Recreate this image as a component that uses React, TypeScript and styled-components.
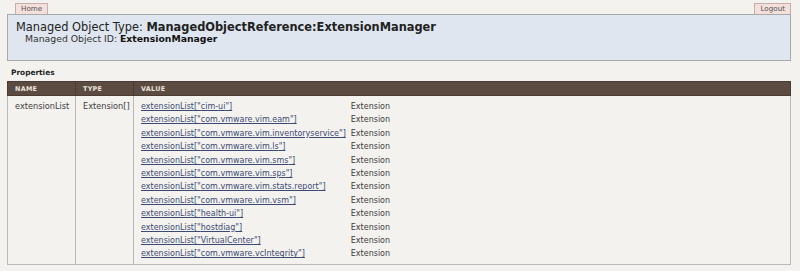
import * as React from 'react';
import styled, { createGlobalStyle } from 'styled-components';

const GlobalStyle = createGlobalStyle`
  html, body {
    margin: 0;
    padding: 0;
    background: #f4f2ef;
  }
  body {
    font-family: "DejaVu Sans", Verdana, sans-serif;
    color: #3a3a3a;
  }
`;

const Page = styled.div`
  padding: 3px 9px 0 7px;
`;

const TabBar = styled.div`
  display: flex;
  justify-content: space-between;
  align-items: flex-end;
  padding: 0 0 0 8px;
`;

const Tab = styled.a`
  display: block;
  height: 10px;
  line-height: 10px;
  padding: 0 5px;
  font-size: 7.2px;
  color: #555;
  background: #f3dfdc;
  border: 1px solid #c7aeaa;
  border-bottom: none;
  text-decoration: none;
`;

const HeaderBox = styled.div`
  height: 47px;
  box-sizing: border-box;
  background: #dfe6ef;
  border: 1px solid #a9a9a9;
  padding: 5px 8px 0 8px;
`;

const Title = styled.div`
  font-size: 11.4px;
  line-height: 14px;
  color: #222;

  b {
    font-weight: bold;
  }
`;

const SubTitle = styled.div`
  font-size: 9.3px;
  line-height: 9px;
  padding-left: 9px;
  color: #333;

  b {
    font-weight: bold;
    color: #111;
  }
`;

const SectionLabel = styled.div`
  font-size: 7.4px;
  font-weight: bold;
  color: #222;
  padding: 6px 0 0 4px;
  line-height: 12px;
  height: 14px;
`;

const Table = styled.table`
  width: 100%;
  border-collapse: collapse;
  font-size: 8px;
`;

const HeadCell = styled.th<{ $w?: number }>`
  background: #5b4b41;
  color: #ece4dc;
  font-size: 6.4px;
  font-weight: bold;
  text-align: left;
  height: 14px;
  padding: 0 0 0 7px;
  width: ${p => (p.$w ? `${p.$w}px` : 'auto')};
  box-sizing: border-box;
  border: 1px solid #4a3c33;
  letter-spacing: 0.3px;
`;

const Cell = styled.td`
  vertical-align: top;
  padding: 4px 0 3px 7px;
  border: 1px solid #b9b9b9;
  border-top: none;
  color: #3c3c3c;
  line-height: 13.4px;
`;

const NameText = styled.span`
  font-size: 8.2px;
`;

const ValueGrid = styled.div`
  display: grid;
  grid-template-columns: auto auto;
  justify-content: start;
  column-gap: 5px;
`;

const Link = styled.a`
  color: #3b4a72;
  text-decoration: underline;
  white-space: nowrap;
`;

const ValueType = styled.span`
  color: #3c3c3c;
`;

const keys = [
  'cim-ui',
  'com.vmware.vim.eam',
  'com.vmware.vim.inventoryservice',
  'com.vmware.vim.ls',
  'com.vmware.vim.sms',
  'com.vmware.vim.sps',
  'com.vmware.vim.stats.report',
  'com.vmware.vim.vsm',
  'health-ui',
  'hostdiag',
  'VirtualCenter',
  'com.vmware.vcIntegrity',
];

export default function App() {
  return (
    <>
      <GlobalStyle />
      <Page>
        <TabBar>
          <Tab href="#">Home</Tab>
          <Tab href="#">Logout</Tab>
        </TabBar>
        <HeaderBox>
          <Title>
            Managed Object Type: <b>ManagedObjectReference:ExtensionManager</b>
          </Title>
          <SubTitle>
            Managed Object ID: <b>ExtensionManager</b>
          </SubTitle>
        </HeaderBox>
        <SectionLabel>Properties</SectionLabel>
        <Table>
          <thead>
            <tr>
              <HeadCell $w={68}>NAME</HeadCell>
              <HeadCell $w={58}>TYPE</HeadCell>
              <HeadCell>VALUE</HeadCell>
            </tr>
          </thead>
          <tbody>
            <tr>
              <Cell><NameText>extensionList</NameText></Cell>
              <Cell><NameText>Extension[]</NameText></Cell>
              <Cell>
                <ValueGrid>
                  {keys.map(k => (
                    <React.Fragment key={k}>
                      <Link href="#">extensionList["{k}"]</Link>
                      <ValueType>Extension</ValueType>
                    </React.Fragment>
                  ))}
                </ValueGrid>
              </Cell>
            </tr>
          </tbody>
        </Table>
      </Page>
    </>
  );
}
